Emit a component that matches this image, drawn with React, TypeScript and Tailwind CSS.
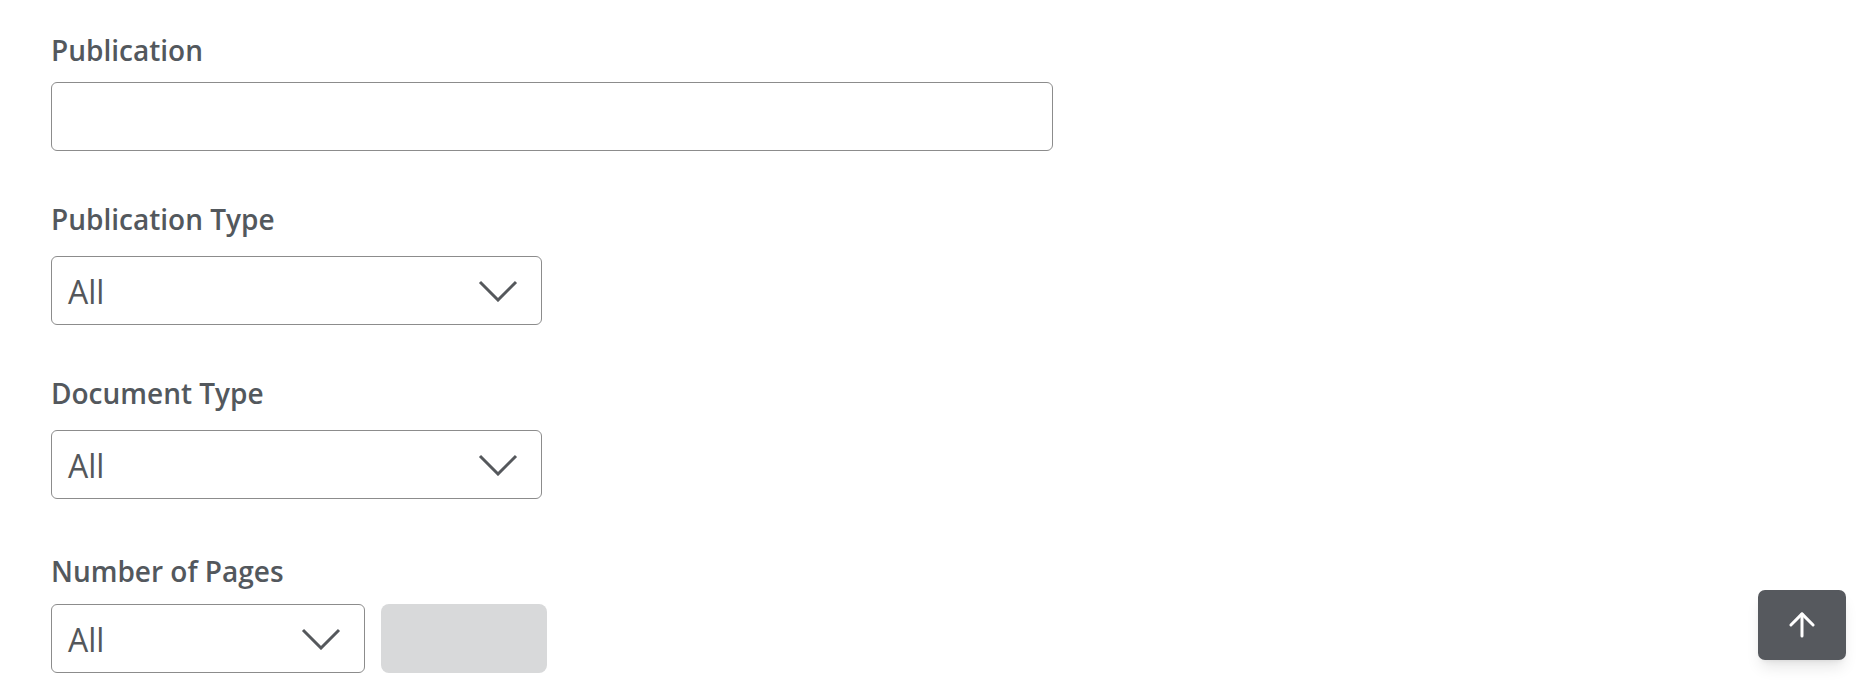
import { ArrowUp } from 'lucide-react';

function Chevron() {
  return (
    <svg width="40" height="22" viewBox="0 0 40 22" fill="none" className="shrink-0">
      <polyline points="2,2 20,20 38,2" stroke="#55585c" strokeWidth="3" strokeLinejoin="miter" />
    </svg>
  );
}

function SelectBox({ width }: { width: string }) {
  return (
    <div className={`${width} h-[69px] flex items-center justify-between pl-[16px] pr-[23px] border border-[#8c8c8c] rounded-[6px] bg-white`}>
      <span className="text-[32px] text-[#54575b] leading-none mt-[2px]">All</span>
      <Chevron />
    </div>
  );
}

function Field({ label, gap, children }: { label: string; gap: string; children: React.ReactNode }) {
  return (
    <div className="flex flex-col">
      <label className="text-[28px] leading-[38px] font-semibold text-[#53585d]">{label}</label>
      <div className={gap}>{children}</div>
    </div>
  );
}

export default function App() {
  return (
    <div className="relative w-[1864px] h-[685px] bg-white overflow-hidden" style={{ fontFamily: '"Open Sans", "Noto Sans", sans-serif' }}>
      <div className="pt-[31px] pl-[51px] flex flex-col">
        <Field label="Publication" gap="mt-[13px]">
          <input type="text" className="w-[1002px] h-[69px] border border-[#8c8c8c] rounded-[6px] px-4 outline-none" />
        </Field>
        <div className="mt-[49px]">
          <Field label="Publication Type" gap="mt-[18px]">
            <SelectBox width="w-[491px]" />
          </Field>
        </div>
        <div className="mt-[49px]">
          <Field label="Document Type" gap="mt-[18px]">
            <SelectBox width="w-[491px]" />
          </Field>
        </div>
        <div className="mt-[53px]">
          <Field label="Number of Pages" gap="mt-[14px]">
            <div className="flex gap-[16px]">
              <SelectBox width="w-[314px]" />
              <div className="w-[166px] h-[69px] rounded-[8px] bg-[#d8d9da]" />
            </div>
          </Field>
        </div>
      </div>

      <button className="absolute right-[18px] bottom-[25px] w-[88px] h-[70px] rounded-[7px] bg-[#56595e] shadow-lg flex items-center justify-center">
        <ArrowUp size={38} color="#ffffff" strokeWidth={1.9} />
      </button>
    </div>
  );
}
